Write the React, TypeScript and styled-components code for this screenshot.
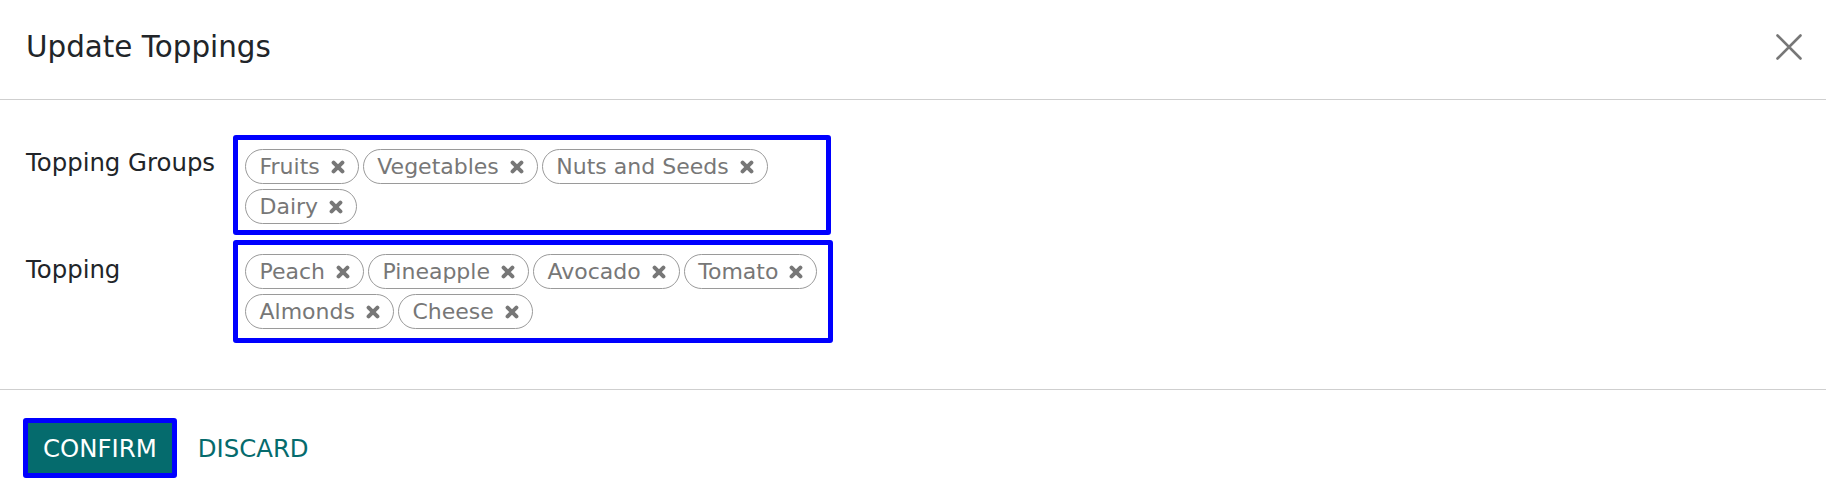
import styled, { createGlobalStyle } from 'styled-components';

const GlobalStyle = createGlobalStyle`
  body {
    margin: 0;
    background: #ffffff;
    font-family: 'DejaVu Sans', 'Noto Sans', sans-serif;
    color: #212529;
  }
`;

const Dialog = styled.div`
  width: 100%;
  background: #fff;
`;

const Header = styled.header`
  height: 100px;
  box-sizing: border-box;
  padding: 0 24px 5px 26px;
  display: flex;
  align-items: center;
  justify-content: space-between;
  border-bottom: 1px solid #cfcfcf;
`;

const Title = styled.h4`
  margin: 0;
  font-size: 29.4px;
  font-weight: 400;
  color: #212529;
`;

const CloseBtn = styled.button`
  border: none;
  background: transparent;
  padding: 0;
  width: 26px;
  height: 26px;
  display: flex;
  align-items: center;
  justify-content: center;
  cursor: pointer;
`;

const Body = styled.div`
  padding: 35px 25px 46px 26px;
  border-bottom: 1px solid #cfcfcf;
  display: flex;
  flex-direction: column;
  gap: 5px;
`;

const Row = styled.div`
  display: grid;
  grid-template-columns: 207px auto;
  align-items: start;
`;

const Label = styled.label<{ offset: number }>`
  font-size: 24.4px;
  line-height: 35px;
  padding-top: ${(p) => p.offset}px;
  color: #212529;
`;

const TagBox = styled.div<{ w: number; padBottom: number }>`
  box-sizing: border-box;
  width: ${(p) => p.w}px;
  border: 5px solid #0000ff;
  border-radius: 3px;
  padding: 9px 6px ${(p) => p.padBottom}px 7px;
  display: flex;
  flex-wrap: wrap;
  gap: 5px 4px;
`;

const Tag = styled.span`
  display: inline-flex;
  align-items: center;
  height: 35px;
  box-sizing: border-box;
  border: 1px solid #9a9a9a;
  border-radius: 18px;
  padding: 0 13px 0 13.5px;
  font-size: 22px;
  color: #777777;
  white-space: nowrap;
`;

const TagClose = styled.span`
  display: inline-flex;
  margin-left: 11px;
  width: 14px;
  height: 14px;
`;

const Footer = styled.footer`
  padding: 28px 23px 24px;
  display: flex;
  align-items: center;
  gap: 4px;
`;

const Button = styled.button<{ primary?: boolean }>`
  height: 60px;
  box-sizing: border-box;
  padding: ${(p) => (p.primary ? '0 15px' : '0 12px')};
  font-family: 'DejaVu Sans', sans-serif;
  font-size: 24.4px;
  text-transform: uppercase;
  cursor: pointer;
  border-radius: 3px;
  border: 5px solid ${(p) => (p.primary ? '#0000ff' : 'transparent')};
  background: ${(p) => (p.primary ? '#056b6d' : 'transparent')};
  color: ${(p) => (p.primary ? '#ffffff' : '#056b6d')};
`;

const XIcon = () => (
  <svg width="14" height="14" viewBox="0 0 14 14">
    <path d="M2.6 2.6 L11.4 11.4 M11.4 2.6 L2.6 11.4" stroke="#777777" strokeWidth="4" strokeLinecap="round" />
  </svg>
);

const fields = [
  { label: 'Topping Groups', tags: ['Fruits', 'Vegetables', 'Nuts and Seeds', 'Dairy'], w: 598, offset: 10, padBottom: 6 },
  { label: 'Topping', tags: ['Peach', 'Pineapple', 'Avocado', 'Tomato', 'Almonds', 'Cheese'], w: 600, offset: 12, padBottom: 9 },
];

export default function App() {
  return (
    <>
      <GlobalStyle />
      <Dialog>
        <Header>
          <Title>Update Toppings</Title>
          <CloseBtn aria-label="Close">
            <svg width="26" height="26" viewBox="0 0 26 26">
              <path d="M1.5 1.5 L24.5 24.5 M24.5 1.5 L1.5 24.5" stroke="#777" strokeWidth="2.6" strokeLinecap="round" />
            </svg>
          </CloseBtn>
        </Header>
        <Body>
          {fields.map((f) => (
            <Row key={f.label}>
              <Label offset={f.offset}>{f.label}</Label>
              <TagBox w={f.w} padBottom={f.padBottom}>
                {f.tags.map((t) => (
                  <Tag key={t}>
                    {t}
                    <TagClose>
                      <XIcon />
                    </TagClose>
                  </Tag>
                ))}
              </TagBox>
            </Row>
          ))}
        </Body>
        <Footer>
          <Button primary>Confirm</Button>
          <Button>Discard</Button>
        </Footer>
      </Dialog>
    </>
  );
}
